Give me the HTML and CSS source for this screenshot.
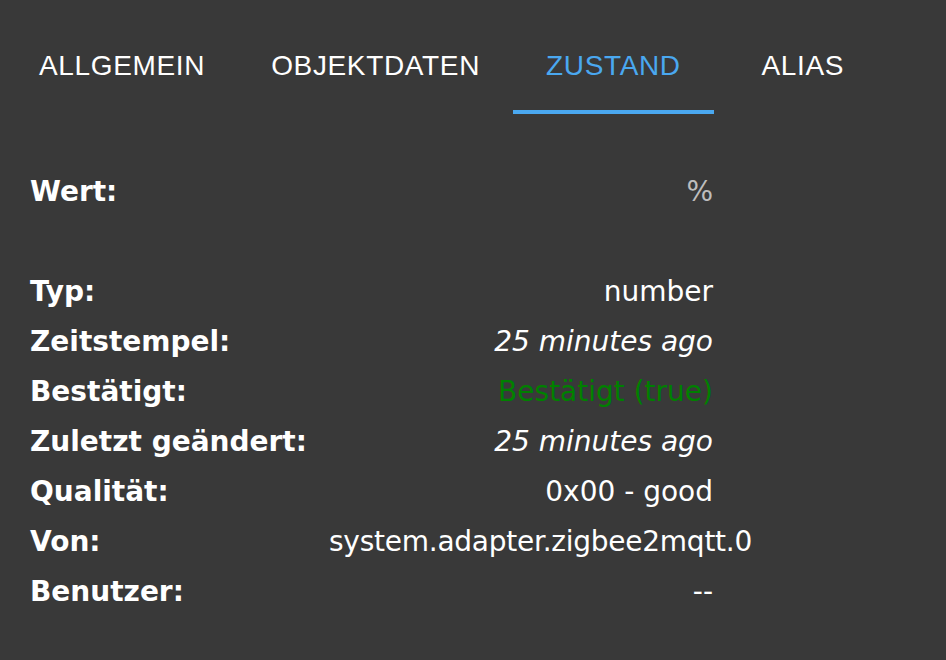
FILE: index.html
```html
<!DOCTYPE html>
<html>
<head>
<meta charset="utf-8">
<link rel="stylesheet" href="styles.css">
</head>
<body>
<div class="page">
  <div class="tabs">
    <div class="tab">ALLGEMEIN</div>
    <div class="tab">OBJEKTDATEN</div>
    <div class="tab active">ZUSTAND</div>
    <div class="tab wide">ALIAS</div>
  </div>
  <div class="table">
    <div class="label">Wert:</div><div class="value muted">%</div>
    <div class="label"></div><div class="value"></div>
    <div class="label">Typ:</div><div class="value">number</div>
    <div class="label">Zeitstempel:</div><div class="value italic">25 minutes ago</div>
    <div class="label">Bestätigt:</div><div class="value green">Bestätigt (true)</div>
    <div class="label">Zuletzt geändert:</div><div class="value italic">25 minutes ago</div>
    <div class="label">Qualität:</div><div class="value">0x00 - good</div>
    <div class="label">Von:</div><div class="value tight">system.adapter.zigbee2mqtt.0</div>
    <div class="label">Benutzer:</div><div class="value">--</div>
  </div>
</div>
</body>
</html>
```
FILE: styles.css
```css
html, body {
  margin: 0;
  padding: 0;
  background: #393939;
  width: 946px;
  height: 660px;
  overflow: hidden;
}
.page {
  padding-top: 18px;
}
.tabs {
  display: flex;
  padding-left: 6px;
  height: 96px;
}
.tab {
  box-sizing: border-box;
  height: 96px;
  padding: 4px 33px 0;
  display: flex;
  align-items: center;
  justify-content: center;
  font-family: "Liberation Sans", Arial, sans-serif;
  font-size: 28px;
  letter-spacing: 0.65px;
  color: #ffffff;
  border-bottom: 4px solid transparent;
}
.tab.wide {
  min-width: 178px;
}
.tab.active {
  color: #4aa8f0;
  border-bottom-color: #4aa8f0;
}
.table {
  display: grid;
  grid-template-columns: 299px 384px;
  grid-auto-rows: 50px;
  padding-left: 30px;
  margin-top: 53px;
  font-family: "DejaVu Sans", Verdana, sans-serif;
  font-size: 28px;
  line-height: 50px;
  color: #ffffff;
}
.label, .value {
  white-space: nowrap;
}
.label {
  font-weight: bold;
}
.value {
  text-align: right;
}
.tight {
  letter-spacing: -0.25px;
}
.muted {
  color: #bdbdbd;
}
.italic {
  font-style: italic;
}
.green {
  color: #008000;
}
```
